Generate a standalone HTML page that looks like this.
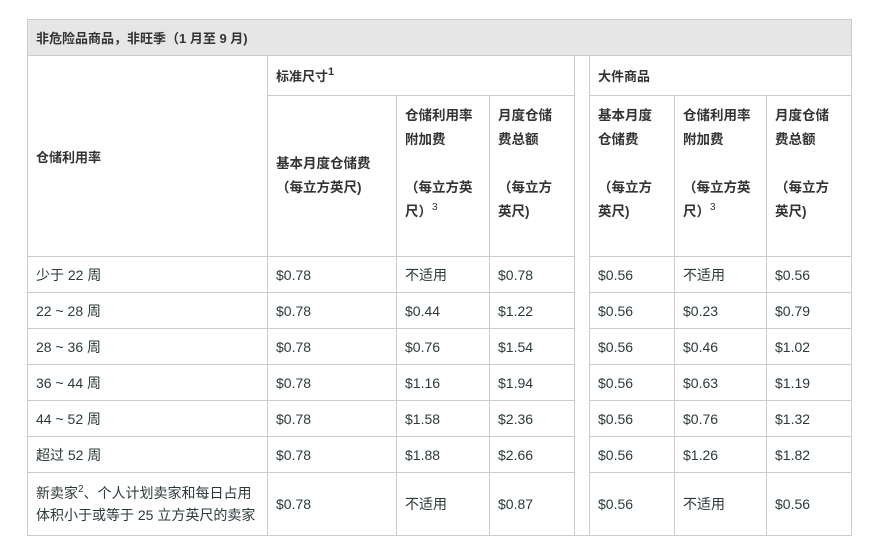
<!DOCTYPE html>
<html><head><meta charset="utf-8"><style>
body{margin:0;background:#fff;font-family:"Liberation Sans","Noto Sans CJK SC",sans-serif;font-size:13px;color:#2b3a3a}
table{position:absolute;left:27px;top:19px;border-collapse:collapse;table-layout:fixed;width:824px}
td{border:1px solid #ccc;padding:0 0 0 8px;vertical-align:middle;box-sizing:border-box}
.h{font-weight:bold;color:#333}
.top{background:#e6e6e6;height:36px}
.r2{height:40px}
.r3{height:161px;line-height:24px;font-size:13.5px}
.d td{height:36px;font-size:14px}
.last td{height:63px;line-height:22px;font-size:14px}
sup{font-size:10px;font-weight:normal;vertical-align:6px;line-height:0}
.sp{padding:0}
</style></head><body>
<table>
<colgroup><col style="width:240px"><col style="width:129px"><col style="width:93px"><col style="width:85px"><col style="width:15px"><col style="width:85px"><col style="width:92px"><col style="width:85px"></colgroup>
<tr class="top"><td colspan="8" class="h">非危险品商品，非旺季（1 月至 9 月)</td></tr>
<tr class="r2"><td rowspan="2" class="h">仓储利用率</td><td colspan="3" class="h">标准尺寸<sup style="font-weight:bold;font-size:11px">1</sup></td><td rowspan="9" class="sp"></td><td colspan="3" class="h">大件商品</td></tr>
<tr class="r3"><td class="h">基本月度仓储费<br>（每立方英尺)</td><td class="h" style="vertical-align:top;padding-top:8px">仓储利用率<br>附加费<br><br>（每立方英<br>尺）<sup>3</sup></td><td class="h" style="vertical-align:top;padding-top:8px">月度仓储<br>费总额<br><br>（每立方<br>英尺)</td><td class="h" style="vertical-align:top;padding-top:8px">基本月度<br>仓储费<br><br>（每立方<br>英尺)</td><td class="h" style="vertical-align:top;padding-top:8px">仓储利用率<br>附加费<br><br>（每立方英<br>尺）<sup>3</sup></td><td class="h" style="vertical-align:top;padding-top:8px">月度仓储<br>费总额<br><br>（每立方<br>英尺)</td></tr>
<tr class="d"><td>少于 22 周</td><td>$0.78</td><td>不适用</td><td>$0.78</td><td>$0.56</td><td>不适用</td><td>$0.56</td></tr>
<tr class="d"><td>22 ~ 28 周</td><td>$0.78</td><td>$0.44</td><td>$1.22</td><td>$0.56</td><td>$0.23</td><td>$0.79</td></tr>
<tr class="d"><td>28 ~ 36 周</td><td>$0.78</td><td>$0.76</td><td>$1.54</td><td>$0.56</td><td>$0.46</td><td>$1.02</td></tr>
<tr class="d"><td>36 ~ 44 周</td><td>$0.78</td><td>$1.16</td><td>$1.94</td><td>$0.56</td><td>$0.63</td><td>$1.19</td></tr>
<tr class="d"><td>44 ~ 52 周</td><td>$0.78</td><td>$1.58</td><td>$2.36</td><td>$0.56</td><td>$0.76</td><td>$1.32</td></tr>
<tr class="d"><td>超过 52 周</td><td>$0.78</td><td>$1.88</td><td>$2.66</td><td>$0.56</td><td>$1.26</td><td>$1.82</td></tr>
<tr class="last"><td>新卖家<sup>2</sup>、个人计划卖家和每日占用<br>体积小于或等于 25 立方英尺的卖家</td><td>$0.78</td><td>不适用</td><td>$0.87</td><td>$0.56</td><td>不适用</td><td>$0.56</td></tr>
</table>
</body></html>
